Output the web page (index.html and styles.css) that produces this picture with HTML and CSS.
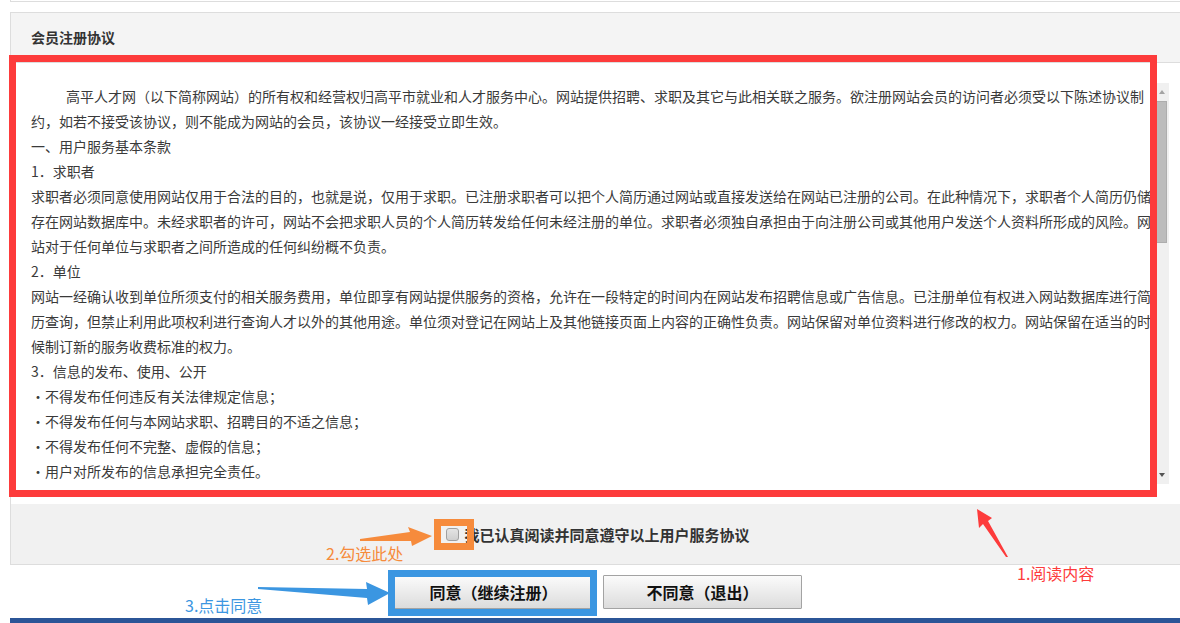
FILE: index.html
```html
<!DOCTYPE html>
<html lang="zh-CN">
<head>
  <meta charset="UTF-8">
  <title>会员注册协议</title>
  <link rel="stylesheet" href="styles.css">
</head>
<body>

  <div class="page">
    <div class="top-box"></div>

    <div class="panel">
      <div class="panel-head">会员注册协议</div>
      <div class="panel-body">
        <div class="agreement">
          <div class="agreement-text">
            <p class="indent">高平人才网（以下简称网站）的所有权和经营权归高平市就业和人才服务中心。网站提供招聘、求职及其它与此相关联之服务。欲注册网站会员的访问者必须受以下陈述协议制约，如若不接受该协议，则不能成为网站的会员，该协议一经接受立即生效。</p>
            <p>一、用户服务基本条款</p>
            <p>1．求职者</p>
            <p>求职者必须同意使用网站仅用于合法的目的，也就是说，仅用于求职。已注册求职者可以把个人简历通过网站或直接发送给在网站已注册的公司。在此种情况下，求职者个人简历仍储存在网站数据库中。未经求职者的许可，网站不会把求职人员的个人简历转发给任何未经注册的单位。求职者必须独自承担由于向注册公司或其他用户发送个人资料所形成的风险。网站对于任何单位与求职者之间所造成的任何纠纷概不负责。</p>
            <p>2．单位</p>
            <p>网站一经确认收到单位所须支付的相关服务费用，单位即享有网站提供服务的资格，允许在一段特定的时间内在网站发布招聘信息或广告信息。已注册单位有权进入网站数据库进行简历查询，但禁止利用此项权利进行查询人才以外的其他用途。单位须对登记在网站上及其他链接页面上内容的正确性负责。网站保留对单位资料进行修改的权力。网站保留在适当的时候制订新的服务收费标准的权力。</p>
            <p>3．信息的发布、使用、公开</p>
            <p>・不得发布任何违反有关法律规定信息；</p>
            <p>・不得发布任何与本网站求职、招聘目的不适之信息；</p>
            <p>・不得发布任何不完整、虚假的信息；</p>
            <p>・用户对所发布的信息承担完全责任。</p>
          </div>
          <div class="scrollbar">
            <span class="sb-up"></span>
            <span class="sb-thumb"></span>
            <span class="sb-fill"></span>
            <span class="sb-down"></span>
          </div>
        </div>
      </div>
      <div class="confirm">
        <label><input type="checkbox">我已认真阅读并同意遵守以上用户服务协议</label>
      </div>
    </div>

    <div class="actions">
      <button>同意（继续注册）</button>
      <button>不同意（退出）</button>
    </div>

    <div class="footer"></div>
  </div>

  <!-- annotations drawn over the page -->
  <div class="marks">
    <div class="mark mark-read"></div>
    <div class="mark mark-check"></div>
    <div class="mark mark-agree"></div>
    <svg class="arrows" width="1180" height="623" viewBox="0 0 1180 623">
      <polygon fill="#fd3b3b" points="977,509 992,518 988,521 1008,557 1006,557 983,524 979,528"/>
      <polygon fill="#f68b3c" points="360,539 410,532 408,527 432,536 412,546 411,541 360,541"/>
      <polygon fill="#3b96e1" points="258,587 367,589 366,582 390,593 368,605 367,598 258,589"/>
    </svg>
    <span class="tip tip-read">1.阅读内容</span>
    <span class="tip tip-check">2.勾选此处</span>
    <span class="tip tip-agree">3.点击同意</span>
  </div>

</body>
</html>
```

FILE: styles.css
```css
html, body {
  overflow: hidden;
}

body {
  margin: 0;
  position: relative;
  height: 623px;
  background: #fff;
  color: #333;
  font-family: "Noto Sans CJK SC", "Liberation Sans", sans-serif;
}

.page {
  width: 1176px;
  margin-left: 10px;
}

.top-box {
  height: 1px;
  border: 1px solid #ddd;
  border-top: 0;
}

.panel {
  margin-top: 10px;
  border: 1px solid #ddd;
}

.panel-head {
  height: 49px;
  line-height: 49px;
  padding-left: 20px;
  background: #f4f4f4;
  border-bottom: 1px solid #ddd;
  font-size: 14px;
  font-weight: bold;
}

.panel-body {
  padding: 20px 0 20px 9px;
  background: #fff;
}

.agreement {
  display: flex;
  width: 1149px;
  height: 401px;
}

.agreement-text {
  flex: 1;
  overflow: hidden;
  padding: 1px 0 0 11px;
  font-size: 14px;
  line-height: 25px;
  color: #3a3a3a;
}

.agreement-text p {
  margin: 0;
}

.agreement-text .indent {
  text-indent: 35px;
}

.scrollbar {
  width: 15px;
  display: flex;
  flex-direction: column;
  background: #f0f0f0;
}

.sb-up,
.sb-down {
  height: 18px;
  display: flex;
  align-items: center;
  justify-content: center;
}

.sb-up::before {
  content: "";
  border-left: 3.5px solid transparent;
  border-right: 3.5px solid transparent;
  border-bottom: 4px solid #a3a3a3;
}

.sb-down::before {
  content: "";
  border-left: 3.5px solid transparent;
  border-right: 3.5px solid transparent;
  border-top: 4px solid #555;
}

.sb-thumb {
  height: 142px;
  margin: 0 2px;
  box-sizing: border-box;
  background: #bcbcbc;
  border: 1px solid #adadad;
}

.sb-fill {
  flex: 1;
}

.confirm {
  height: 60px;
  display: flex;
  align-items: center;
  justify-content: center;
  background: #f1f1f1;
}

.confirm label {
  display: flex;
  align-items: center;
  font-size: 15px;
  font-weight: bold;
  color: #333;
}

.confirm input {
  appearance: none;
  -webkit-appearance: none;
  width: 13px;
  height: 13px;
  margin: 0 5px 0 0;
  border: 1px solid #a0a0a0;
  border-radius: 3px;
  background: linear-gradient(#e4e4e4, #cfcfcf);
}

.actions {
  display: flex;
  justify-content: center;
  gap: 10px;
  padding-top: 10px;
}

.actions button {
  width: 199px;
  height: 34px;
  padding: 0;
  border: 1px solid #a3a3a3;
  border-radius: 1px;
  background: linear-gradient(#fbfbfb, #dcdcdc);
  color: #111;
  font-family: "Noto Sans CJK SC", sans-serif;
  font-size: 16px;
  font-weight: bold;
}

.footer {
  margin-top: 9px;
  height: 10px;
  background: #2b5597;
}

/* annotations */
.marks {
  position: absolute;
  top: 0;
  left: 0;
  width: 1180px;
  height: 623px;
  pointer-events: none;
}

.mark {
  position: absolute;
  box-sizing: border-box;
}

.mark-read {
  left: 9px;
  top: 55px;
  width: 1148px;
  height: 442px;
  border: 7px solid #fd3b3b;
}

.mark-check {
  left: 434px;
  top: 519px;
  width: 40px;
  height: 31px;
  border: 7px solid #f68b3c;
}

.mark-agree {
  left: 388px;
  top: 570px;
  width: 209px;
  height: 46px;
  border: 7px solid #3b96e1;
}

.arrows {
  position: absolute;
  top: 0;
  left: 0;
}

.tip {
  position: absolute;
  font-size: 16px;
  line-height: 20px;
  white-space: nowrap;
}

.tip-read {
  left: 1017px;
  top: 563px;
  color: #fd3b3b;
}

.tip-check {
  left: 326px;
  top: 543px;
  color: #f68b3c;
}

.tip-agree {
  left: 185px;
  top: 595px;
  color: #3b96e1;
}
```
